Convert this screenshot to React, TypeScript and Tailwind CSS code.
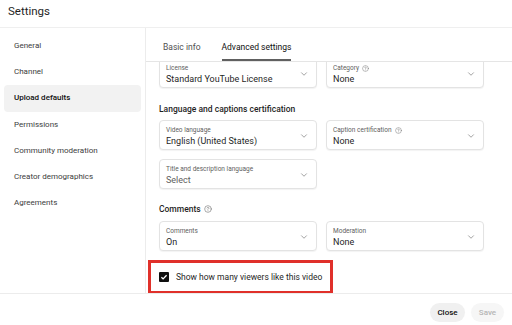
import { ChevronDown, CircleHelp } from 'lucide-react';

const NAV = [
  'General',
  'Channel',
  'Upload defaults',
  'Permissions',
  'Community moderation',
  'Creator demographics',
  'Agreements',
];

interface FieldProps {
  label: string;
  value: string;
  help?: boolean;
  muted?: boolean;
}

function Field({ label, value, help = false, muted = false }: FieldProps) {
  return (
    <div className="relative h-[30px] w-[158px] rounded-[4px] border border-[#e3e3e3] bg-white px-[6px] pt-[5px] shadow-[0_1px_1px_rgba(0,0,0,0.05)]">
      <div className="flex items-center gap-[3px] text-[6.5px] leading-[9px] text-[#606060]">
        {label}
        {help ? <CircleHelp size={7} strokeWidth={1.6} className="text-[#707070]" /> : null}
      </div>
      <div className={`text-[9px] leading-[12px] ${muted ? 'text-[#606060]' : 'text-[#1f1f1f]'}`}>{value}</div>
      <ChevronDown
        size={10}
        strokeWidth={1.4}
        className="absolute right-[7px] top-[10px] text-[#606060]"
      />
    </div>
  );
}

export default function App() {
  return (
    <div className="flex h-[325px] w-[512px] flex-col overflow-hidden bg-white font-['Roboto',sans-serif] text-[#1f1f1f]">
      {/* Dialog title */}
      <div className="h-[28px] shrink-0 border-b border-[#efefef] pl-[8px] pt-[3px] text-[11.5px] leading-[16px]">
        Settings
      </div>

      <div className="flex min-h-0 flex-1">
        {/* Left nav */}
        <nav className="w-[146px] shrink-0 border-r border-[#ececec] px-[4px] pt-[5px]">
          {NAV.map((item) => {
            const active = item === 'Upload defaults';
            return (
              <div
                key={item}
                className={`flex h-[26.2px] items-center rounded-[4px] pl-[10px] text-[8px] ${
                  active ? 'bg-[#f2f2f2] font-medium text-[#0f0f0f]' : 'text-[#3c3c3c]'
                }`}
              >
                {item}
              </div>
            );
          })}
        </nav>

        {/* Right pane */}
        <div className="flex min-w-0 flex-1 flex-col">
          <div className="flex h-[34px] shrink-0 items-end gap-[21px] border-b border-[#e5e5e5] pl-[17px]">
            <div className="pb-[9px] text-[8.5px] leading-[10px] text-[#505050]">Basic info</div>
            <div className="border-b-2 border-[#606060] pb-[7px] text-[8.5px] leading-[10px] text-[#0f0f0f]">
              Advanced settings
            </div>
          </div>

          <div className="min-h-0 flex-1 overflow-hidden">
            <div className="-mt-[4px] pl-[13px]">
              <div className="grid grid-cols-[158px_158px] gap-x-[9px]">
                <Field label="License" value="Standard YouTube License" />
                <Field label="Category" value="None" help />
              </div>

              <div className="mt-[15px] text-[8.5px] font-medium leading-[12px] text-[#1f1f1f]">
                Language and captions certification
              </div>
              <div className="mt-[5px] grid grid-cols-[158px_158px] gap-x-[9px] gap-y-[9px]">
                <Field label="Video language" value="English (United States)" />
                <Field label="Caption certification" value="None" help />
                <Field label="Title and description language" value="Select" muted />
              </div>

              <div className="mt-[14px] flex items-center gap-[3px] text-[8.5px] font-medium leading-[12px] text-[#1f1f1f]">
                Comments
                <CircleHelp size={8} strokeWidth={1.6} className="text-[#606060]" />
              </div>
              <div className="mt-[6px] grid grid-cols-[158px_158px] gap-x-[9px]">
                <Field label="Comments" value="On" />
                <Field label="Moderation" value="None" />
              </div>
            </div>

            <div className="ml-[2px] mt-[9px] flex h-[34px] w-[185px] items-center gap-[7px] border-[3px] border-[#e0302a] pl-[8px]">
              <span className="flex h-[10px] w-[10px] items-center justify-center rounded-[1px] bg-[#0f0f0f]">
                <svg width="8" height="8" viewBox="0 0 8 8" aria-hidden="true">
                  <path d="M1.4 4.2l1.7 1.7L6.6 2.2" fill="none" stroke="white" strokeWidth="1.3" />
                </svg>
              </span>
              <span className="text-[8.5px] text-[#1f1f1f]">Show how many viewers like this video</span>
            </div>
          </div>
        </div>
      </div>

      {/* Footer */}
      <div className="flex h-[32px] shrink-0 items-start justify-end gap-[6px] border-t border-[#ececec] pr-[8px] pt-[9px]">
        <button className="h-[19px] w-[35px] rounded-full bg-[#f0f0f0] text-[8px] font-medium text-[#0f0f0f]">
          Close
        </button>
        <button className="h-[19px] w-[33px] rounded-full bg-[#f6f6f6] text-[8px] font-medium text-[#b5b5b5]">
          Save
        </button>
      </div>
    </div>
  );
}
